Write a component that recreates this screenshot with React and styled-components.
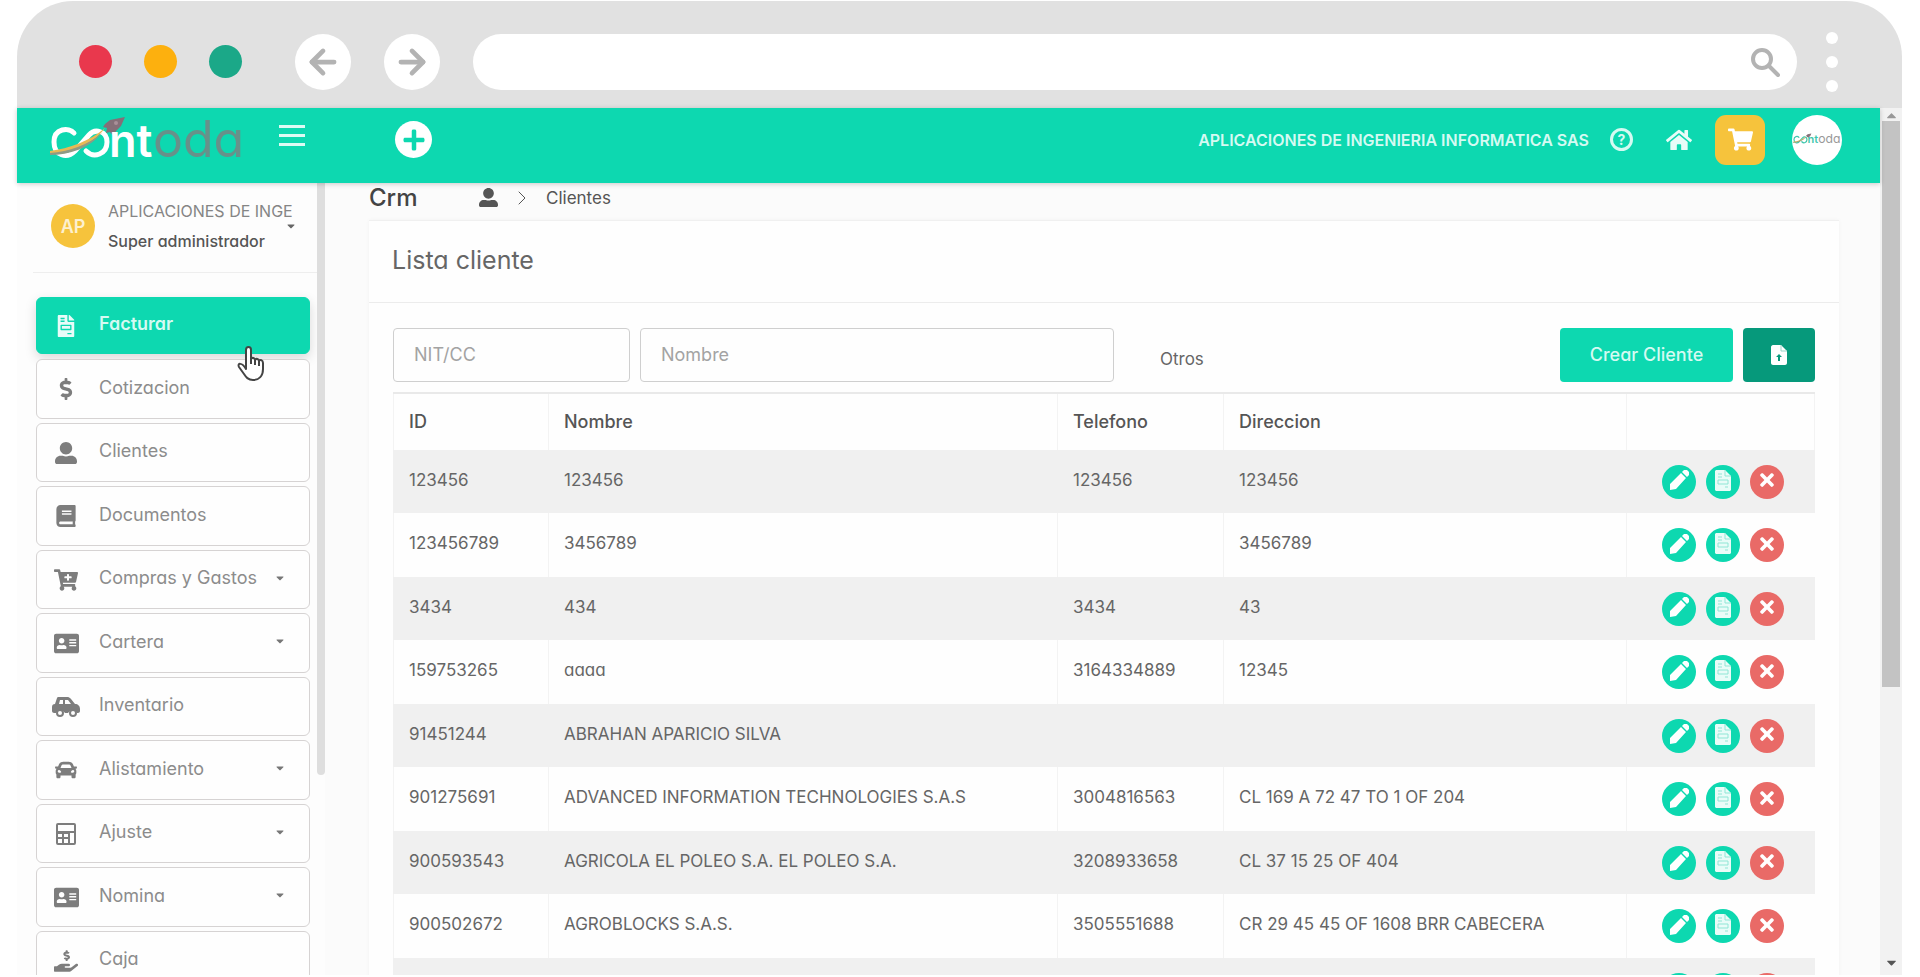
import React from "react";
import styled, { createGlobalStyle } from "styled-components";
import {
  FaAddressCard,
  FaBook,
  FaCar,
  FaCaretDown,
  FaCaretUp,
  FaCartPlus,
  FaDollarSign,
  FaFileInvoice,
  FaHandHoldingUsd,
  FaHome,
  FaPlus,
  FaShoppingCart,
  FaTimes,
  FaUserAlt,
} from "react-icons/fa";
import { FiArrowLeft, FiArrowRight, FiChevronRight } from "react-icons/fi";

const GlobalStyle = createGlobalStyle`
  * {
    box-sizing: border-box;
  }

  body {
    margin: 0;
    background: #fff;
    color: #666;
    font-family: Inter, "Open Sans", "Liberation Sans", sans-serif;
    font-size: 17px;
    font-feature-settings: "cv11";
    overflow: hidden;
  }

  button,
  input {
    font: inherit;
    font-feature-settings: inherit;
  }

  button {
    border: 0;
    padding: 0;
    cursor: pointer;
  }

  a {
    color: inherit;
    text-decoration: none;
  }
`;

const Frame = styled.div`
  display: flex;
  flex-direction: column;
  height: 100vh;
  padding: 1px 18px 2px 17px;
`;

const BrowserBar = styled.div`
  display: flex;
  align-items: center;
  flex: none;
  height: 107px;
  padding: 0 64px 0 62px;
  border-radius: 56px 56px 0 0;
  background: #e1e1e1;
`;

const Dots = styled.div`
  display: flex;
  gap: 32px;
  margin: 14px 53px 0 0;
`;

const Dot = styled.span`
  width: 33px;
  height: 33px;
  border-radius: 50%;
  background: ${({ color }) => color};
`;

const NavButton = styled.button`
  display: flex;
  align-items: center;
  justify-content: center;
  flex: none;
  width: 56px;
  height: 56px;
  margin: 14px 33px 0 0;
  border-radius: 50%;
  background: #fff;
  color: #b3b3b3;
  font-size: 38px;

  svg {
    stroke-width: 3;
  }
`;

const Address = styled.label`
  display: flex;
  align-items: center;
  flex: 1;
  height: 56px;
  margin: 14px 29px 0 0;
  padding: 0 17px 0 28px;
  border-radius: 28px;
  background: #fff;

  input {
    flex: 1;
    border: 0;
    outline: 0;
    font-size: 18px;
    background: transparent;
  }
`;

const MoreButton = styled.button`
  display: flex;
  flex-direction: column;
  gap: 12px;
  margin-top: 14px;
  background: transparent;

  span {
    width: 12px;
    height: 12px;
    border-radius: 50%;
    background: #fff;
  }
`;

const Viewport = styled.div`
  display: flex;
  flex: 1;
  min-height: 0;
`;

const Page = styled.div`
  display: flex;
  flex-direction: column;
  flex: 1;
  min-width: 0;
`;

const Topbar = styled.header`
  display: flex;
  align-items: center;
  flex: none;
  height: 75px;
  padding: 0 38px 12px 33px;
  background: #0dd8b0;
  box-shadow: 0 1px 5px rgba(0, 0, 0, 0.2);
  z-index: 1;
`;

const LogoLink = styled.a`
  width: 196px;

  svg {
    display: block;
  }
`;

const MenuButton = styled.button`
  display: flex;
  flex-direction: column;
  gap: 6px;
  width: 26px;
  margin: 0 90px 8px 33px;
  background: transparent;

  span {
    height: 3px;
    background: #dcfbf4;
  }
`;

const AddButton = styled.button`
  display: flex;
  align-items: center;
  justify-content: center;
  width: 37px;
  height: 37px;
  border-radius: 50%;
  background: #fff;
  color: #0dd8b0;
  font-size: 24px;
`;

const Company = styled.span`
  margin: 0 21px 0 auto;
  color: #d5faf2;
  font-size: 16px;
  font-weight: 600;
`;

const HelpButton = styled.button`
  width: 23px;
  height: 23px;
  border: 3px solid #d5faf2;
  border-radius: 50%;
  background: transparent;
  color: #d5faf2;
  font-size: 14px;
  font-weight: 700;
  line-height: 17px;
`;

const HomeLink = styled.a`
  display: flex;
  margin: 0 23px 0 33px;
  color: #e7fcf8;
  font-size: 26px;
`;

const CartButton = styled.button`
  display: flex;
  align-items: center;
  justify-content: center;
  width: 50px;
  height: 50px;
  margin-right: 27px;
  border-radius: 11px;
  background: #f6c33c;
  color: #fff;
  font-size: 25px;
`;

const CompanyBadge = styled.button`
  display: flex;
  align-items: center;
  justify-content: center;
  width: 50px;
  height: 50px;
  border-radius: 50%;
  background: #fff;
`;

const Columns = styled.div`
  display: flex;
  flex: 1;
  min-height: 0;
`;

const Sidebar = styled.aside`
  display: flex;
  flex: none;
  width: 308px;
  overflow: hidden;
  background: #fdfdfd;
`;

const SidebarBody = styled.div`
  width: 300px;
`;

const SidebarThumb = styled.div`
  width: 8px;
  height: 592px;
  border-radius: 0 0 4px 4px;
  background: #dedede;
`;

const Profile = styled.div`
  display: flex;
  align-items: center;
  height: 90px;
  margin: 0 0 24px 16px;
  padding: 0 20px 3px 18px;
  border-bottom: 1px solid #eee;
`;

const Initials = styled.span`
  display: flex;
  align-items: center;
  justify-content: center;
  flex: none;
  width: 44px;
  height: 44px;
  margin-right: 13px;
  border-radius: 50%;
  background: #f6c33c;
  color: #fdf0cf;
  font-size: 18px;
  font-weight: 600;
`;

const ProfileText = styled.div`
  flex: 1;
  min-width: 0;
  font-size: 16px;
  line-height: 30px;
`;

const ProfileName = styled.div`
  color: #858585;
  white-space: nowrap;
`;

const ProfileRole = styled.div`
  color: #555;
  font-weight: 500;
`;

const ProfileCaret = styled.span`
  display: flex;
  justify-content: flex-end;
  width: 12px;
  margin-left: -12px;
  color: #666;
  font-size: 12px;
`;

const Menu = styled.nav`
  display: flex;
  flex-direction: column;
  gap: 4px;
  margin: 0 7px 0 19px;
`;

const MenuItem = styled.a`
  display: flex;
  align-items: center;
  flex: none;
  height: 60px;
  padding: 0 23px 4px 15px;
  border: 1px solid ${({ $active }) => ($active ? "#0dd8b0" : "#d6d3d3")};
  border-radius: 6px;
  background: ${({ $active }) => ($active ? "#0dd8b0" : "#fefefe")};
  color: ${({ $active }) => ($active ? "#d5faf2" : "#8c8c8c")};
  font-size: 18px;
  font-weight: ${({ $active }) => ($active ? 600 : 400)};

  &:nth-child(odd) {
    height: 59px;
  }

  &:first-child {
    height: 57px;
    margin-bottom: 1px;
    box-shadow: 0 4px 12px rgba(0, 0, 0, 0.15);
  }
`;

const MenuIcon = styled.span`
  display: flex;
  justify-content: center;
  width: 28px;
  margin: 4px 19px 0 0;
  color: ${({ $active }) => ($active ? "#e7fcf8" : "#7d7d7d")};
  font-size: ${({ $size }) => $size || 22}px;
`;

const MenuCaret = styled.span`
  display: flex;
  margin-left: auto;
  color: #777;
  font-size: 12px;
`;

const Pointer = styled.svg`
  position: absolute;
  left: 237px;
  top: 346px;
  z-index: 2;
`;

const Main = styled.main`
  flex: 1;
  min-width: 0;
  padding: 0 41px 0 44px;
  background: #fbfbfb;
  overflow: hidden;
`;

const Breadcrumb = styled.div`
  display: flex;
  align-items: center;
  height: 37px;
  padding: 0 0 8px;
  color: #555;
`;

const PageTitle = styled.h1`
  width: 110px;
  margin: 0;
  color: #444;
  font-size: 24px;
  font-weight: 500;
`;

const Crumbs = styled.nav`
  display: flex;
  align-items: center;
  gap: 12px;
`;

const Card = styled.section`
  background: #fefefe;
  border-top: 1px solid #f0f0f0;
  box-shadow: 0 0 4px rgba(0, 0, 0, 0.04);
`;

const CardTitle = styled.h2`
  height: 82px;
  margin: 0;
  padding: 22px 23px;
  border-bottom: 1px solid #ececec;
  color: #666;
  font-size: 25px;
  font-weight: 400;
  line-height: 34px;
`;

const CardBody = styled.div`
  padding: 25px 24px 0;
`;

const Filters = styled.form`
  display: flex;
  gap: 10px;
  margin-bottom: 10px;
  font-size: 18px;
`;

const Field = styled.input`
  width: ${({ $width }) => $width}px;
  height: 54px;
  padding: 0 20px 2px;
  border: 1px solid #cfcfcf;
  border-radius: 4px;
  background: #fefefe;
  color: #666;

  &::placeholder {
    color: #a3a3a3;
    opacity: 1;
  }
`;

const Others = styled.a`
  margin-right: auto;
  padding: 8px 0 0 36px;
  font-size: 17px;
  line-height: 46px;
`;

const CreateButton = styled.button`
  width: 173px;
  height: 54px;
  padding-bottom: 2px;
  border-radius: 4px;
  background: #0dd8b0;
  color: #d5faf2;
  font-weight: 500;
`;

const ImportButton = styled.button`
  display: flex;
  align-items: center;
  justify-content: center;
  width: 72px;
  height: 54px;
  border-radius: 4px;
  background: #06997b;
`;

const Table = styled.table`
  width: 100%;
  table-layout: fixed;
  border-collapse: separate;
  border-spacing: 0;
  border-top: 2px solid #e9e9e9;
`;

const Th = styled.th`
  width: ${({ $width }) => ($width ? `${$width}px` : "auto")};
  height: 56px;
  padding: 0 15px 2px;
  border-left: 1px solid #f3f3f3;
  color: #555;
  font-size: 18px;
  font-weight: 500;
  text-align: left;

  &:last-child {
    border-right: 1px solid #f3f3f3;
  }
`;

const Td = styled.td`
  height: inherit;
  padding: 0 15px 4px;
  border-left: 1px solid #f3f3f3;
  white-space: nowrap;
`;

const Row = styled.tr`
  height: 64px;

  &:nth-child(odd) {
    height: 63px;
    background: #f0f0f0;
  }

  &:nth-child(odd) td {
    border-color: #f0f0f0;
  }
`;

const Actions = styled.div`
  display: flex;
  gap: 10px;
  padding: 4px 0 0 20px;
`;

const Action = styled.button`
  display: flex;
  align-items: center;
  justify-content: center;
  flex: none;
  width: 34px;
  height: 34px;
  border-radius: 50%;
  background: ${({ $danger }) => ($danger ? "#e96a67" : "#0dd8b0")};
  color: #fff;
  font-size: 20px;

  svg {
    margin-bottom: 3px;
  }
`;

const Scrollbar = styled.div`
  display: flex;
  flex-direction: column;
  align-items: center;
  flex: none;
  width: 22px;
  background: #f2f2f2;
  color: #999;
  font-size: 15px;
`;

const ScrollThumb = styled.div`
  width: 18px;
  height: 566px;
  margin: -2px 0 auto;
  background: #c3c3c3;
`;

const ScrollDown = styled(FaCaretDown)`
  margin-bottom: 5px;
  color: #555;
`;

const Logo = ({ width, onWhite }) => {
  const light = onWhite ? "#3fc7ad" : "#fff";
  const grey = onWhite ? "#999" : "#67918a";

  return (
    <svg width={width} viewBox="0 -10 196 66" fill="none" role="img" aria-label="contoda">
      <path
        d="M24 16C19 10 4 11 4 25C4 39 17 42 25 34L39 18C45 11 57 14 57 25C57 37 44 42 36 34"
        stroke={light}
        strokeWidth="5"
        strokeLinecap="round"
      />
      <path d="M-1 34C18 32 40 24 55 11C42 29 19 36 0 37Z" fill="#e7b955" />
      <path d="M-1 36C18 35 38 28 52 16C40 31 19 38 0 38Z" fill="#8f9a85" />
      <path d="M55 7L60 3L75 0L71 9L66 14L64 20L60 15L56 16L57 11L53 10Z" fill="#856f78" />
      <circle cx="66" cy="6" r="2" fill="#a98f99" />
      <text x="59" y="40" fill={light} fontSize="45" fontWeight="600">
        nt
      </text>
      <text x="103" y="40" fill={grey} fontSize="50" fontWeight="400">
        oda
      </text>
    </svg>
  );
};

const SearchIcon = () => (
  <svg width="30" height="30" viewBox="0 0 30 30" fill="none" stroke="#b3b3b3" strokeLinecap="round">
    <circle cx="12" cy="12" r="9" strokeWidth="4" />
    <path d="M19 19l9 9" strokeWidth="4" />
  </svg>
);

const CalculatorIcon = () => (
  <svg width="20" height="22" viewBox="0 0 20 22" fill="none" stroke="currentColor" strokeWidth="2">
    <rect x="1" y="1" width="18" height="20" rx="1" />
    <path d="M1 9h18M7 9v12M13 9v12M1 15h12M2 10h12" />
  </svg>
);

const SideCarIcon = () => (
  <svg width="28" height="20" viewBox="0 0 28 20">
    <path
      fill="currentColor"
      fillRule="evenodd"
      d="M7 0h9c1 0 2 1 3 2l4 5c3 0 5 2 5 5v2c0 1-1 2-2 2h-1a5 5 0 0 0-9 0h-3a5 5 0 0 0-9 0H2c-1 0-2-1-2-2v-4c0-2 1-3 3-3l2-6c0-1 1-1 2-1zM8 3L7 7h4V3zM13 3v4h6l-3-4z"
    />
    <circle cx="8" cy="16" r="3" fill="none" stroke="currentColor" strokeWidth="2" />
    <circle cx="21" cy="16" r="3" fill="none" stroke="currentColor" strokeWidth="2" />
  </svg>
);

const PencilIcon = () => (
  <svg width="20" height="20" viewBox="0 0 20 20" fill="#fff">
    <path d="M12 3L17 8L7 19L1 20L1 14ZM13 2L15 0C16-1 17-1 18 0L20 2C21 3 21 4 20 5L18 7Z" />
  </svg>
);

const DocumentIcon = () => (
  <svg width="16" height="21" viewBox="0 0 16 21">
    <path d="M1 0h9l6 6v14l-1 1H1l-1-1V1z" fill="#e9fcf8" />
    <path d="M10 0v6h6M3 4h4M3 7h4M3 10h10v4H3zM10 17h3" fill="none" stroke="#8fe6d5" />
  </svg>
);

const UploadFileIcon = () => (
  <svg width="16" height="20" viewBox="0 0 16 20">
    <path d="M2 0h8l6 6v12c0 1-1 2-2 2H2c-1 0-2-1-2-2V2C0 1 1 0 2 0z" fill="#fff" />
    <path d="M10 0v6h6" fill="none" stroke="#9ad6c9" />
    <path d="M8 9l3 3H9v4H7v-4H5z" fill="#06997b" />
  </svg>
);

const menu = [
  { label: "Facturar", icon: <FaFileInvoice />, active: true },
  { label: "Cotizacion", icon: <FaDollarSign /> },
  { label: "Clientes", icon: <FaUserAlt /> },
  { label: "Documentos", icon: <FaBook /> },
  { label: "Compras y Gastos", icon: <FaCartPlus />, size: 24, caret: true },
  { label: "Cartera", icon: <FaAddressCard />, size: 25, caret: true },
  { label: "Inventario", icon: <SideCarIcon /> },
  { label: "Alistamiento", icon: <FaCar />, caret: true },
  { label: "Ajuste", icon: <CalculatorIcon />, caret: true },
  { label: "Nomina", icon: <FaAddressCard />, size: 25, caret: true },
  { label: "Caja", icon: <FaHandHoldingUsd />, size: 24 },
];

const clients = [
  ["123456", "123456", "123456", "123456"],
  ["123456789", "3456789", "", "3456789"],
  ["3434", "434", "3434", "43"],
  ["159753265", "aaaa", "3164334889", "12345"],
  ["91451244", "ABRAHAN APARICIO SILVA", "", ""],
  ["901275691", "ADVANCED INFORMATION TECHNOLOGIES S.A.S", "3004816563", "CL 169 A 72 47 TO 1 OF 204"],
  ["900593543", "AGRICOLA EL POLEO S.A. EL POLEO S.A.", "3208933658", "CL 37 15 25 OF 404"],
  ["900502672", "AGROBLOCKS S.A.S.", "3505551688", "CR 29 45 45 OF 1608 BRR CABECERA"],
  ["", "", "", ""],
];

const App = () => (
  <>
    <GlobalStyle />
    <Frame>
      <BrowserBar>
        <Dots>
          <Dot color="#e9384d" />
          <Dot color="#fdb00e" />
          <Dot color="#1ba888" />
        </Dots>
        <NavButton aria-label="Atras"><FiArrowLeft /></NavButton>
        <NavButton aria-label="Adelante"><FiArrowRight /></NavButton>
        <Address>
          <input type="text" aria-label="Direccion web" />
          <SearchIcon />
        </Address>
        <MoreButton aria-label="Mas opciones">
          <span />
          <span />
          <span />
        </MoreButton>
      </BrowserBar>

      <Viewport>
        <Page>
          <Topbar>
            <LogoLink href="#inicio"><Logo width={196} /></LogoLink>
            <MenuButton aria-label="Menu">
              <span />
              <span />
              <span />
            </MenuButton>
            <AddButton aria-label="Agregar"><FaPlus /></AddButton>
            <Company>APLICACIONES DE INGENIERIA INFORMATICA SAS</Company>
            <HelpButton>?</HelpButton>
            <HomeLink href="#inicio" aria-label="Inicio"><FaHome /></HomeLink>
            <CartButton aria-label="Carrito"><FaShoppingCart /></CartButton>
            <CompanyBadge aria-label="Cuenta"><Logo width={48} onWhite /></CompanyBadge>
          </Topbar>

          <Columns>
            <Sidebar>
              <SidebarBody>
                <Profile>
                  <Initials>AP</Initials>
                  <ProfileText>
                    <ProfileName>APLICACIONES DE INGE</ProfileName>
                    <ProfileRole>Super administrador</ProfileRole>
                  </ProfileText>
                  <ProfileCaret><FaCaretDown /></ProfileCaret>
                </Profile>
                <Menu>
                  {menu.map(({ label, icon, size, active, caret }) => (
                    <MenuItem key={label} href={`#${label}`} $active={active}>
                      <MenuIcon $active={active} $size={size}>{icon}</MenuIcon>
                      {label}
                      {caret && <MenuCaret><FaCaretDown /></MenuCaret>}
                    </MenuItem>
                  ))}
                </Menu>
              </SidebarBody>
              <SidebarThumb />
            </Sidebar>

            <Main>
              <Breadcrumb>
                <PageTitle>Crm</PageTitle>
                <Crumbs>
                  <FaUserAlt size={19} />
                  <FiChevronRight size={24} strokeWidth={1} />
                  <a href="#Clientes">Clientes</a>
                </Crumbs>
              </Breadcrumb>
              <Card>
                <CardTitle>Lista cliente</CardTitle>
                <CardBody>
                  <Filters>
                    <Field $width={237} placeholder="NIT/CC" aria-label="NIT/CC" />
                    <Field $width={474} placeholder="Nombre" aria-label="Nombre" />
                    <Others href="#otros">Otros</Others>
                    <CreateButton type="button">Crear Cliente</CreateButton>
                    <ImportButton type="button" aria-label="Importar"><UploadFileIcon /></ImportButton>
                  </Filters>
                  <Table>
                    <thead>
                      <tr>
                        <Th $width={155}>ID</Th>
                        <Th>Nombre</Th>
                        <Th $width={166}>Telefono</Th>
                        <Th $width={403}>Direccion</Th>
                        <Th $width={189} aria-label="Acciones" />
                      </tr>
                    </thead>
                    <tbody>
                      {clients.map((client, i) => (
                        <Row key={i}>
                          {client.map((value, j) => (
                            <Td key={j}>{value}</Td>
                          ))}
                          <Td>
                            <Actions>
                              <Action aria-label="Editar"><PencilIcon /></Action>
                              <Action aria-label="Ver documento"><DocumentIcon /></Action>
                              <Action $danger aria-label="Eliminar"><FaTimes /></Action>
                            </Actions>
                          </Td>
                        </Row>
                      ))}
                    </tbody>
                  </Table>
                </CardBody>
              </Card>
            </Main>
          </Columns>
        </Page>

        <Scrollbar>
          <FaCaretUp />
          <ScrollThumb />
          <ScrollDown />
        </Scrollbar>
      </Viewport>
    </Frame>

    <Pointer width="28" height="35" viewBox="0 0 28 35" fill="#fff" stroke="#444" strokeWidth="2" strokeLinejoin="round">
      <path d="M9 23V4c0-4 5-4 5 0v9c1-2 4-1 4 1c1-2 4-1 4 1c1-2 4-1 4 2v6c0 7-4 11-10 11c-5 0-7-3-9-6l-5-7c-2-4 3-5 7 2z" />
      <path d="M14 12v6M18 14v5M22 15v5" />
    </Pointer>
  </>
);

export default App;
